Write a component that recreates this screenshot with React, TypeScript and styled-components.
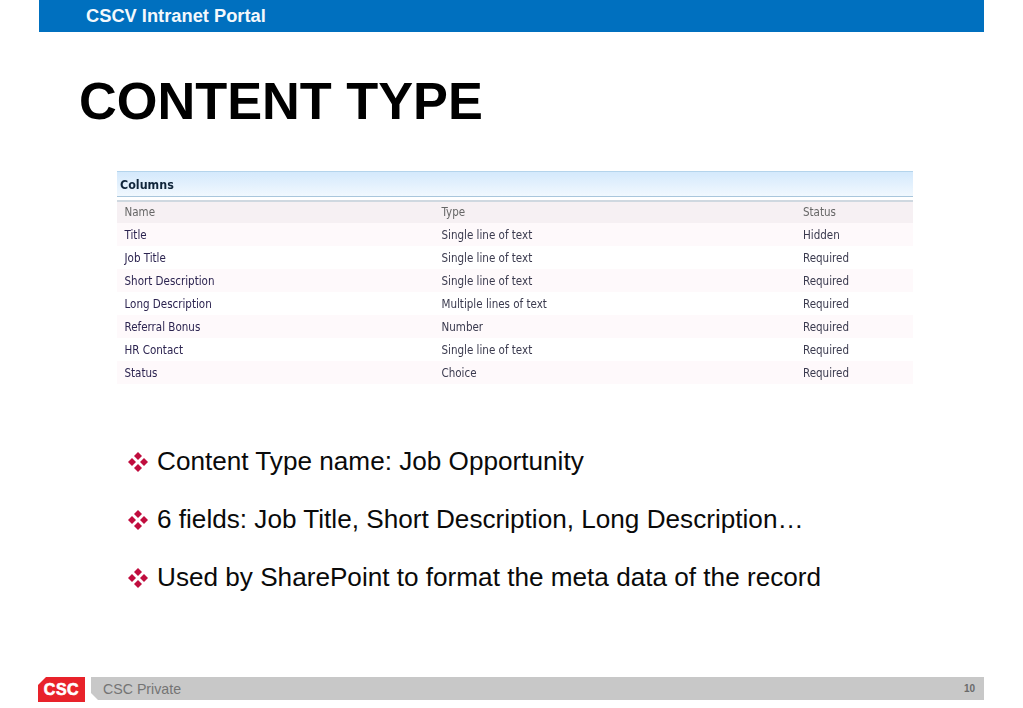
import React from "react";
import styled, { createGlobalStyle } from "styled-components";

const Global = createGlobalStyle`
  html, body { margin: 0; padding: 0; background: #fff; }
  body { font-family: "Liberation Sans", Arial, sans-serif; }
`;

const Slide = styled.div`
  width: 945px;
  height: 708px;
  margin-left: 39px;
  display: flex;
  flex-direction: column;
  color: #000;
`;

const TopBar = styled.header`
  height: 32px;
  background: #0070bf;
  color: #f4f8fc;
  font-size: 18.3px;
  font-weight: 700;
  line-height: 31px;
  padding-left: 47px;
`;

const Title = styled.h1`
  margin: 38px 0 0 40px;
  font-size: 52.3px;
  line-height: 62px;
  font-weight: 700;
  letter-spacing: 0;
`;

const Panel = styled.section`
  margin: 39px 0 0 78px;
  width: 796px;
  font-family: "DejaVu Sans", "Noto Sans", sans-serif;
  font-stretch: condensed;
  font-size: 11.5px;
  filter: blur(0.4px);
`;

const PanelHead = styled.div`
  height: 24px;
  line-height: 25px;
  padding-left: 3px;
  border-top: 1px solid #b4d4ec;
  background: linear-gradient(#d4e9fc, #f1f8fe);
  border-bottom: 1px solid #a9c6dc;
  font-size: 12.4px;
  font-weight: 700;
  color: #10253a;
`;

const Row = styled.div<{ $head?: boolean; $shade?: boolean }>`
  display: grid;
  grid-template-columns: 317px 361.5px 1fr;
  height: 23px;
  line-height: 25px;
  padding-left: 7.5px;
  color: ${(p) => (p.$head ? "#666" : "#3a3a4e")};
  background: ${(p) => (p.$head ? "#f6f0f3" : p.$shade ? "#fef9fb" : "#fff")};
`;

const HeadRow = styled(Row)`
  margin-top: 3px;
  border-top: 2px solid #cfd8e0;
  height: 21px;
  line-height: 21px;
`;

const NameLink = styled.span`
  color: #2c2450;
`;

const Bullets = styled.ul`
  list-style: none;
  margin: 63px 0 0 89px;
  padding: 0;
  display: flex;
  flex-direction: column;
  gap: 29px;
`;

const Bullet = styled.li`
  display: flex;
  align-items: center;
  gap: 9px;
  font-size: 26.15px;
  line-height: 29px;
  color: #0a0a0a;
`;

const Spacer = styled.div`
  flex: 1;
`;

const Footer = styled.footer`
  display: flex;
  height: 25px;
  margin-bottom: 6px;
  margin-left: -1px;
  gap: 6px;
  align-items: flex-start;
`;

const Logo = styled.div`
  width: 47px;
  height: 25px;
  background: #e8222a;
  clip-path: polygon(8px 0, 100% 0, 100% 100%, 0 100%, 0 8px);
  color: #fff;
  font-size: 16px;
  font-weight: 700;
  letter-spacing: 0.5px;
  line-height: 26px;
  text-align: center;
  -webkit-text-stroke: 0.6px #fff;
`;

const FooterBar = styled.div`
  flex: 1;
  height: 23px;
  background: #c8c8c8;
  clip-path: polygon(0 0, 100% 0, 100% 100%, 7px 100%, 0 16px);
  display: flex;
  justify-content: space-between;
  align-items: center;
  padding: 0 9px 0 12px;
  color: #747474;
  font-size: 14.2px;
`;

const PageNo = styled.span`
  font-size: 10px;
  font-weight: 700;
  color: #6a6a6a;
`;

function Diamonds() {
  return (
    <svg width="20" height="20" viewBox="2.5 2.5 15 15" aria-hidden="true">
      <g fill="#c00d3e">
        <path d="M10 2.5 13 5.5 10 8.5 7 5.5Z" />
        <path d="M10 11.5 13 14.5 10 17.5 7 14.5Z" />
        <path d="M5.5 7 8.5 10 5.5 13 2.5 10Z" />
        <path d="M14.5 7 17.5 10 14.5 13 11.5 10Z" />
      </g>
    </svg>
  );
}

const rows: [string, string, string][] = [
  ["Title", "Single line of text", "Hidden"],
  ["Job Title", "Single line of text", "Required"],
  ["Short Description", "Single line of text", "Required"],
  ["Long Description", "Multiple lines of text", "Required"],
  ["Referral Bonus", "Number", "Required"],
  ["HR Contact", "Single line of text", "Required"],
  ["Status", "Choice", "Required"],
];

const bullets = [
  "Content Type name: Job Opportunity",
  "6 fields: Job Title, Short Description, Long Description…",
  "Used by SharePoint to format the meta data of the record",
];

export default function App() {
  return (
    <Slide>
      <Global />
      <TopBar>CSCV Intranet Portal</TopBar>
      <Title>CONTENT TYPE</Title>
      <Panel>
        <PanelHead>Columns</PanelHead>
        <HeadRow $head>
          <span>Name</span>
          <span>Type</span>
          <span>Status</span>
        </HeadRow>
        {rows.map(([n, t, s], i) => (
          <Row key={n} $shade={i % 2 === 0}>
            <NameLink>{n}</NameLink>
            <span>{t}</span>
            <span>{s}</span>
          </Row>
        ))}
      </Panel>
      <Bullets>
        {bullets.map((b) => (
          <Bullet key={b}>
            <Diamonds />
            <span>{b}</span>
          </Bullet>
        ))}
      </Bullets>
      <Spacer />
      <Footer>
        <Logo>CSC</Logo>
        <FooterBar>
          <span>CSC Private</span>
          <PageNo>10</PageNo>
        </FooterBar>
      </Footer>
    </Slide>
  );
}
